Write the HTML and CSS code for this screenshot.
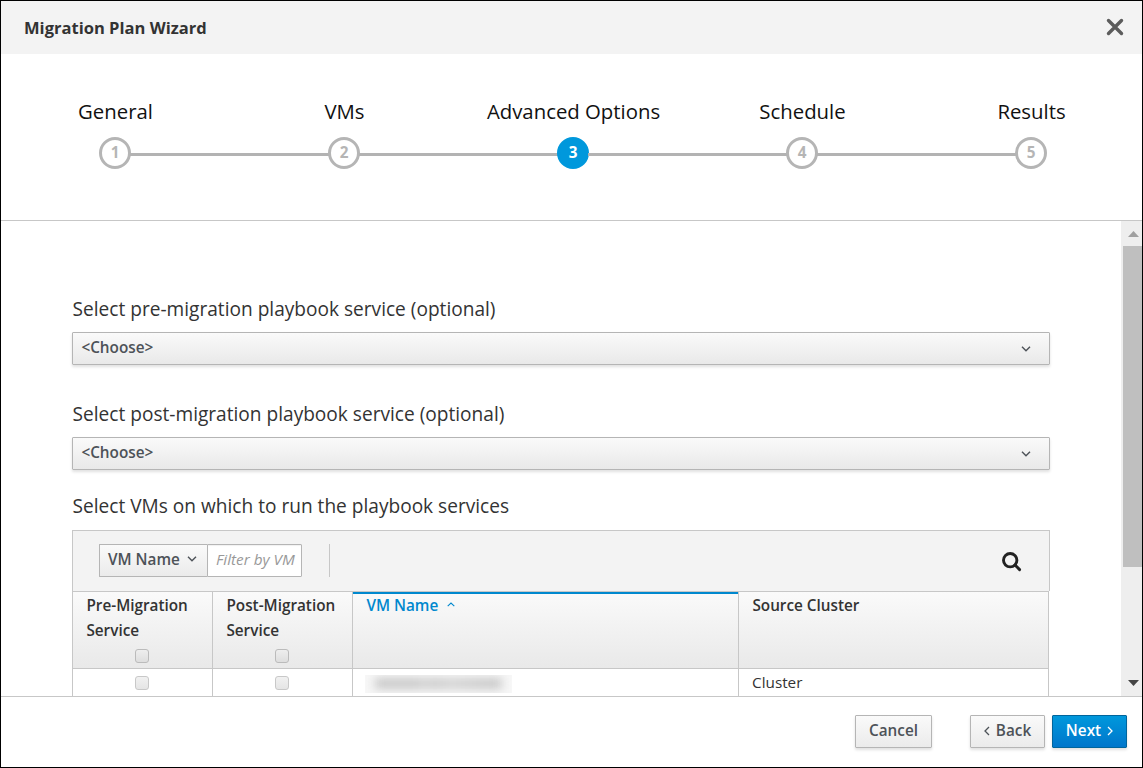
FILE: index.html
```html
<!DOCTYPE html>
<html lang="en">
<head>
<meta charset="utf-8">
<title>Migration Plan Wizard</title>
<link rel="stylesheet" href="styles.css">
</head>
<body>
<div class="wizard">
  <header class="wizard-header">
    <h1 class="wizard-title">Migration Plan Wizard</h1>
    <svg class="close-icon" viewBox="0 0 18 18"><path d="M2.5 2.5 15.5 15.5M15.5 2.5 2.5 15.5"/></svg>
  </header>
  <nav class="steps">
    <div class="step"><span class="step-label">General</span><span class="step-number">1</span></div>
    <div class="step-line"></div>
    <div class="step"><span class="step-label">VMs</span><span class="step-number">2</span></div>
    <div class="step-line"></div>
    <div class="step"><span class="step-label">Advanced Options</span><span class="step-number active">3</span></div>
    <div class="step-line"></div>
    <div class="step"><span class="step-label">Schedule</span><span class="step-number">4</span></div>
    <div class="step-line"></div>
    <div class="step"><span class="step-label">Results</span><span class="step-number">5</span></div>
  </nav>
  <div class="wizard-body">
    <main class="content">
      <div class="field-label">Select pre-migration playbook service (optional)</div>
      <div class="select"><span>&lt;Choose&gt;</span><svg class="chevron" viewBox="0 0 10 6"><path d="M1 .8 5 4.8 9 .8"/></svg></div>
      <div class="field-label second">Select post-migration playbook service (optional)</div>
      <div class="select"><span>&lt;Choose&gt;</span><svg class="chevron" viewBox="0 0 10 6"><path d="M1 .8 5 4.8 9 .8"/></svg></div>
      <div class="field-label third">Select VMs on which to run the playbook services</div>
      <div class="toolbar">
        <div class="filter-type"><span>VM Name</span><svg class="chevron" viewBox="0 0 10 6"><path d="M1 .8 5 4.8 9 .8"/></svg></div>
        <div class="filter-input"><span class="placeholder">Filter by VM</span></div>
        <div class="divider"></div>
        <svg class="search-icon" viewBox="0 0 20 20"><circle cx="8.2" cy="8.2" r="6.7"/><path d="M13 13 17.6 17.6"/></svg>
      </div>
      <div class="table">
        <div class="th"><span>Pre-Migration Service</span><i class="checkbox"></i></div>
        <div class="th"><span>Post-Migration Service</span><i class="checkbox"></i></div>
        <div class="th sorted"><span>VM Name</span><svg class="sort-icon" viewBox="0 0 8 5"><path d="M.7 4.2 4 1 7.3 4.2"/></svg></div>
        <div class="th"><span>Source Cluster</span></div>
        <div class="td center"><i class="checkbox"></i></div>
        <div class="td center"><i class="checkbox"></i></div>
        <div class="td"><div class="redacted"><div class="smudge"></div></div></div>
        <div class="td"><span>Cluster</span></div>
      </div>
    </main>
    <div class="scrollbar">
      <svg class="arrow" viewBox="0 0 11 6"><path d="M0 6 5.5 0 11 6z" fill="#a0a0a0"/></svg>
      <div class="thumb"></div>
      <svg class="arrow down" viewBox="0 0 11 6"><path d="M0 0H11L5.5 6z" fill="#444"/></svg>
    </div>
  </div>
  <footer class="wizard-footer">
    <div class="button cancel">Cancel</div>
    <div class="button back"><svg class="angle" viewBox="0 0 6 10"><path d="M5 1 1 5 5 9"/></svg><span>Back</span></div>
    <div class="button primary"><span>Next</span><svg class="angle" viewBox="0 0 6 10"><path d="M1 1 5 5 1 9"/></svg></div>
  </footer>
</div>
</body>
</html>
```

FILE: styles.css
```css
* { box-sizing: border-box; }
body { margin: 0; font-family: "Open Sans", sans-serif; font-size: 15.3px; color: #333; }
svg { display: block; flex: none; fill: none; stroke: none; }
.wizard { width: 1143px; height: 768px; border: 1px solid #000; background: #fff; display: flex; flex-direction: column; overflow: hidden; }
.wizard-header { height: 53px; flex: none; background: #f3f3f3; display: flex; align-items: center; justify-content: space-between; padding: 0 18px 0 23px; }
.wizard-title { margin: 0; font-size: 16.55px; font-weight: 700; line-height: 24px; }
.close-icon { width: 18px; height: 18px; margin-bottom: 1px; stroke: #5c5c5c; stroke-width: 3.4; stroke-linecap: round; }

.steps { height: 167px; flex: none; border-bottom: 1px solid #c7c7c7; padding: 42px 95px 0 98px; display: flex; }
.step { width: 32px; flex: none; display: flex; flex-direction: column; align-items: center; }
.step-label { font-size: 20.35px; line-height: 31px; height: 41px; padding-left: 1px; color: #111; white-space: nowrap; }
.step-number { width: 32px; height: 32px; border: 3px solid #b5b5b5; border-radius: 50%; color: #b5b5b5; font-size: 15.3px; font-weight: 700; line-height: 24px; text-align: center; }
.step-number.active { border-color: #0098dc; background: #0098dc; color: #fff; }
.step-line { flex: 1; height: 3px; margin: 57px -1px 0; background: #b3b3b3; }

.wizard-body { height: 475px; flex: none; display: flex; overflow: hidden; }
.content { flex: 1; padding: 74px 71px 0; }
.field-label { font-size: 19.1px; line-height: 28px; height: 37px; padding-left: .6px; white-space: nowrap; }
.second { margin-top: 35px; margin-bottom: 0; }
.third { margin-top: 22px; height: 38px; }
.select { width: 978px; height: 33px; border: 1px solid #b5b5b5; border-radius: 1px; background: linear-gradient(#fafafa, #e9e9e9); box-shadow: 0 2px 3px rgba(0,0,0,.12); display: flex; align-items: center; justify-content: space-between; padding: 0 18.5px 3px 8.4px; font-weight: 600; color: #4d5258; }
.chevron { width: 10px; height: 6px; stroke: #4d5258; stroke-width: 1.4; }
.select .chevron { margin-top: 3px; }
.toolbar { width: 978px; height: 61px; border: 1px solid #c7c7c7; border-bottom: 0; background: #f3f3f3; display: flex; padding: 13px 27px 0 26px; }
.filter-type { width: 108px; height: 33px; border: 1px solid #b5b5b5; border-right: 0; border-radius: 1px 0 0 1px; background: linear-gradient(#fafafa, #ebebeb); padding: 0 10px 3px 8px; display: flex; align-items: center; justify-content: space-between; font-weight: 600; color: #4d5258; }
.filter-input { width: 95px; height: 33px; border: 1px solid #b5b5b5; border-radius: 0 1px 1px 0; background: #fff; box-shadow: inset 0 1px 1px rgba(0,0,0,.06); padding: 0 7px 0 8px; }
.placeholder { display: block; white-space: nowrap; font-size: 15.3px; font-style: italic; color: #999; line-height: 29px; }
.divider { width: 1px; height: 33px; background: #c7c7c7; margin-left: 27px; }
.search-icon { width: 20px; height: 20px; margin: 8px 0 0 auto; stroke: #222; stroke-width: 2.9; stroke-linecap: round; }

.table { width: 977px; display: grid; grid-template-columns: 140px 140px 386px 310px; border-left: 1px solid #c7c7c7; }
.th { height: 77px; border-top: 1px solid #c7c7c7; border-right: 1px solid #c7c7c7; background: linear-gradient(#fafafa, #e9e9e9); font-weight: 600; line-height: 25px; padding: 1px 13px 0; display: flex; flex-direction: column; align-items: center; }
.th > span { align-self: stretch; white-space: normal; margin-right: -6px; padding-left: .4px; }
.th .checkbox { margin-top: 6px; margin-right: 1px; }
.sorted { flex-direction: row; align-items: flex-start; color: #0088ce; box-shadow: inset 0 2px #0088ce; }
.th.sorted > span { align-self: auto; margin-right: 0; }
.sort-icon { width: 8px; height: 5px; margin: 9px 0 0 9px; stroke: #0088ce; stroke-width: 1.1; }
.td { height: 50px; border-top: 1px solid #c7c7c7; border-right: 1px solid #c7c7c7; padding: 1px 13px 0; line-height: 25px; }
.center { display: flex; justify-content: center; padding: 7px 14px 0 13px; }
.checkbox { display: block; flex: none; width: 14px; height: 14px; border: 1px solid #bbb; border-radius: 3px; background: linear-gradient(#eee, #dedede); }
.td .checkbox { border-color: #c8c8c8; background: linear-gradient(#f1f1f1, #e5e5e5); }
.redacted { width: 147px; height: 18px; margin: 5px 0 0 -1px; overflow: hidden; background: #f7f7f7; padding: 3px 10px; }
.smudge { height: 11px; background: linear-gradient(90deg, #c8c8c8, #c8c8c8 35%, #d4d4d4 38%, #cacaca 45%, #d2d2d2 60%, #c8c8c8 90%); filter: blur(5px); }

.scrollbar { width: 21px; flex: none; background: #eee; padding: 10px 0 10px 2px; display: flex; flex-direction: column; }
.arrow { width: 11px; height: 6px; margin-left: 5px; }
.thumb { height: 321px; margin-top: 9px; background: #bfbfbf; }
.down { margin-top: auto; }

.wizard-footer { flex: 1; border-top: 1px solid #c7c7c7; display: flex; justify-content: flex-end; padding: 18px 15px 0; }
.button { height: 33px; border: 1px solid #b5b5b5; border-radius: 1px; background: linear-gradient(#fafafa, #ebebeb); box-shadow: 0 2px 3px rgba(0,0,0,.12); display: flex; align-items: center; justify-content: center; gap: 6px; padding-bottom: 3px; font-weight: 600; color: #4d5258; }
.cancel { width: 77px; margin-right: 38px; }
.back { width: 75px; margin-right: 7px; }
.primary { width: 75px; border-color: #00659c; background: linear-gradient(#0098dc, #0076cb); color: #fff; }
.angle { width: 6px; height: 10px; stroke: currentColor; stroke-width: 1.3; margin-top: 1px; }
```
